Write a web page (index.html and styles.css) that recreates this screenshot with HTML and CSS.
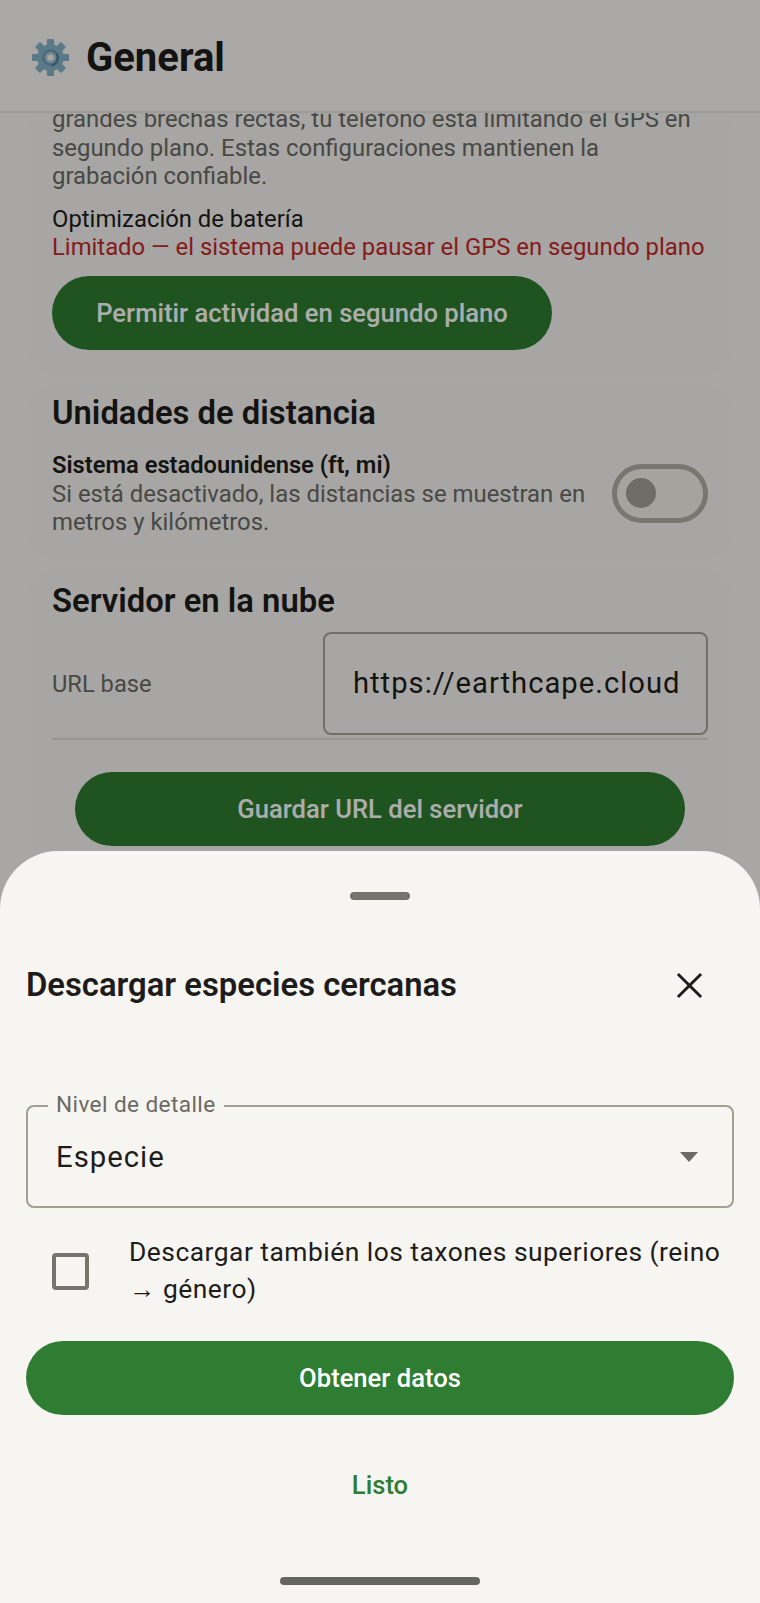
FILE: index.html
```html
<!DOCTYPE html>
<html lang="es">
<head>
  <meta charset="utf-8">
  <title>General</title>
  <link rel="stylesheet" href="styles.css">
</head>
<body>
  <div class="screen">
    <header class="topbar">
      <svg class="gear" viewBox="0 0 36 36" aria-hidden="true">
        <g fill="#85b4c9">
          <circle cx="18" cy="18" r="13"/>
          <rect x="14.5" y="0" width="7" height="36" rx="1"/>
          <rect x="14.5" y="0" width="7" height="36" rx="1" transform="rotate(45 18 18)"/>
          <rect x="14.5" y="0" width="7" height="36" rx="1" transform="rotate(90 18 18)"/>
          <rect x="14.5" y="0" width="7" height="36" rx="1" transform="rotate(135 18 18)"/>
        </g>
        <circle cx="18" cy="18" r="8" fill="#6f9db3"/>
        <path d="M24 14a8 8 0 0 1-5 12" fill="none" stroke="#4f7f96" stroke-width="2"/>
        <circle cx="18" cy="18" r="5.5" fill="#a9c8d6"/>
        <circle cx="18" cy="18" r="3" fill="#f7f5f1"/>
      </svg>
      <h1 class="page-title">General</h1>
    </header>

    <main class="content">
      <section class="card card-gps">
        <p class="muted">grandes brechas rectas, tu teléfono está limitando el GPS en segundo plano. Estas configuraciones mantienen la grabación confiable.</p>
        <div class="battery">
          <div class="battery-label">Optimización de batería</div>
          <div class="battery-state">Limitado — el sistema puede pausar el GPS en segundo plano</div>
        </div>
        <button class="pill pill-auto" type="button">Permitir actividad en segundo plano</button>
      </section>

      <section class="card card-units">
        <h2 class="card-title">Unidades de distancia</h2>
        <div class="setting">
          <div class="setting-text">
            <div class="setting-name">Sistema estadounidense (ft, mi)</div>
            <div class="muted">Si está desactivado, las distancias se muestran en metros y kilómetros.</div>
          </div>
          <div class="switch"><span class="switch-thumb"></span></div>
        </div>
      </section>

      <section class="card card-server">
        <h2 class="card-title">Servidor en la nube</h2>
        <div class="url-row">
          <span class="url-label">URL base</span>
          <div class="url-input">https://earthcape.cloud</div>
        </div>
        <button class="pill pill-save" type="button">Guardar URL del servidor</button>
      </section>
    </main>

    <div class="scrim"></div>

    <aside class="sheet">
      <div class="handle"></div>
      <div class="sheet-head">
        <h2 class="sheet-title">Descargar especies cercanas</h2>
        <svg class="close" viewBox="0 0 28 28" aria-hidden="true">
          <path d="M2 2 26 26M26 2 2 26" fill="none" stroke="#1d1c1a" stroke-width="3"/>
        </svg>
      </div>
      <div class="field">
        <span class="field-label">Nivel de detalle</span>
        <span class="field-value">Especie</span>
        <span class="field-arrow"></span>
      </div>
      <div class="check-row">
        <span class="checkbox"></span>
        <span class="check-text">Descargar también los taxones superiores (reino → género)</span>
      </div>
      <button class="pill pill-fetch" type="button">Obtener datos</button>
      <button class="text-btn" type="button">Listo</button>
      <div class="home-bar"></div>
    </aside>
  </div>
</body>
</html>
```

FILE: styles.css
```css
* {
  box-sizing: border-box;
}

html, body {
  margin: 0;
  height: 100%;
}

body {
  background: #f8f7f4;
  font-family: Roboto, "Liberation Sans", sans-serif;
  color: #1d1c1a;
}

h1, h2, p {
  margin: 0;
}

.screen {
  position: relative;
  display: flex;
  flex-direction: column;
  width: 760px;
  height: 1603px;
  overflow: hidden;
}

.topbar {
  flex: none;
  display: flex;
  align-items: center;
  gap: 17px;
  height: 113px;
  padding: 3px 0 0 32px;
  background: #f9f8f5;
  border-bottom: 2px solid #e4e3df;
}

.gear {
  width: 37px;
  height: 37px;
}

.page-title {
  font-size: 40px;
  font-weight: 700;
  letter-spacing: 0;
}

.content {
  flex: 1;
  display: flex;
  flex-direction: column;
  gap: 8px;
  padding: 0 28px;
  overflow: hidden;
}

.card {
  flex: none;
  padding: 0 24px;
  border-radius: 28px;
  background: #f6f5f2;
}

.card-gps {
  margin-top: -8px;
  height: 270px;
}

.muted {
  font-size: 23.9px;
  line-height: 28px;
  color: #6b6a65;
}

.card-gps .muted {
  line-height: 28.5px;
}

.battery {
  margin-top: 14px;
  font-size: 23.85px;
  line-height: 28.5px;
}

.battery-label {
  color: #1d1c1a;
}

.battery-state {
  color: #c62828;
}

.pill {
  display: block;
  height: 74px;
  border: 0;
  border-radius: 37px;
  background: #2e7d32;
  color: #fff;
  font-family: inherit;
  font-size: 25.6px;
  font-weight: 500;
}

.pill-auto {
  width: 500px;
  margin-top: 14px;
}

.card-units {
  height: 178px;
  padding-top: 11px;
}

.card-title {
  font-size: 32.8px;
  font-weight: 600;
  line-height: 38px;
}

.setting {
  display: flex;
  align-items: center;
  gap: 24px;
  margin-top: 19px;
}

.setting-text {
  flex: 1;
}

.setting-name {
  font-size: 23.7px;
  font-weight: 600;
  line-height: 28.5px;
}

.switch {
  flex: none;
  display: flex;
  align-items: center;
  width: 96px;
  height: 59px;
  padding-left: 9px;
  border: 5px solid #b0aea7;
  border-radius: 30px;
  background: #f2f0e9;
}

.switch-thumb {
  width: 30px;
  height: 30px;
  border-radius: 50%;
  background: #a3a19a;
}

.card-server {
  height: 300px;
  padding-top: 13px;
}

.url-row {
  display: flex;
  align-items: center;
  justify-content: space-between;
  margin-top: 12px;
  padding-bottom: 3px;
  border-bottom: 2px solid #dedcd6;
}

.url-label {
  font-size: 23.7px;
  color: #6b6a65;
}

.url-input {
  width: 385px;
  height: 103px;
  padding-left: 28px;
  border: 2px solid #a6a49c;
  border-radius: 8px;
  font-size: 29.2px;
  line-height: 99px;
  letter-spacing: 1px;
  white-space: nowrap;
}

.pill-save {
  width: 610px;
  margin: 32px auto 0;
}

.scrim {
  position: absolute;
  inset: 0;
  background: rgba(0, 0, 0, 0.32);
}

.sheet {
  position: absolute;
  left: 0;
  right: 0;
  bottom: 0;
  height: 752px;
  padding: 41px 26px 0;
  border-radius: 58px 58px 0 0;
  background: #f7f5f1;
}

.handle {
  width: 60px;
  height: 8px;
  margin: 0 auto;
  border-radius: 4px;
  background: #76756d;
}

.sheet-head {
  display: flex;
  align-items: center;
  justify-content: space-between;
  margin-top: 61px;
  margin-bottom: 96px;
  padding-right: 31px;
  height: 48px;
}

.sheet-title {
  font-size: 32.8px;
  font-weight: 600;
}

.close {
  width: 27px;
  height: 27px;
}

.field {
  position: relative;
  display: flex;
  align-items: center;
  justify-content: space-between;
  height: 103px;
  padding: 0 34px 0 28px;
  border: 2px solid #a09f92;
  border-radius: 8px;
}

.field-label {
  position: absolute;
  left: 20px;
  top: -15px;
  padding: 0 8px;
  background: #f7f5f1;
  font-size: 22.6px;
  line-height: 26px;
  letter-spacing: 0.4px;
  color: #6b6a65;
}

.field-value {
  font-size: 29.3px;
  letter-spacing: 1px;
}

.field-arrow {
  width: 0;
  height: 0;
  border-left: 9px solid transparent;
  border-right: 9px solid transparent;
  border-top: 10px solid #6b6a65;
}

.check-row {
  display: flex;
  align-items: center;
  gap: 40px;
  margin-top: 26px;
  padding-left: 26px;
}

.checkbox {
  flex: none;
  width: 37px;
  height: 37px;
  border: 4px solid #76756d;
  border-radius: 4px;
}

.check-text {
  font-size: 26.4px;
  line-height: 37px;
  letter-spacing: 0.49px;
}

.pill-fetch {
  width: 100%;
  margin-top: 33px;
}

.text-btn {
  display: block;
  margin: 55px auto 0;
  padding: 0;
  border: 0;
  background: none;
  color: #2e7d32;
  font-family: inherit;
  font-size: 25.6px;
  font-weight: 500;
}

.home-bar {
  position: absolute;
  left: 280px;
  bottom: 18px;
  width: 200px;
  height: 8px;
  border-radius: 4px;
  background: #666661;
}
```
